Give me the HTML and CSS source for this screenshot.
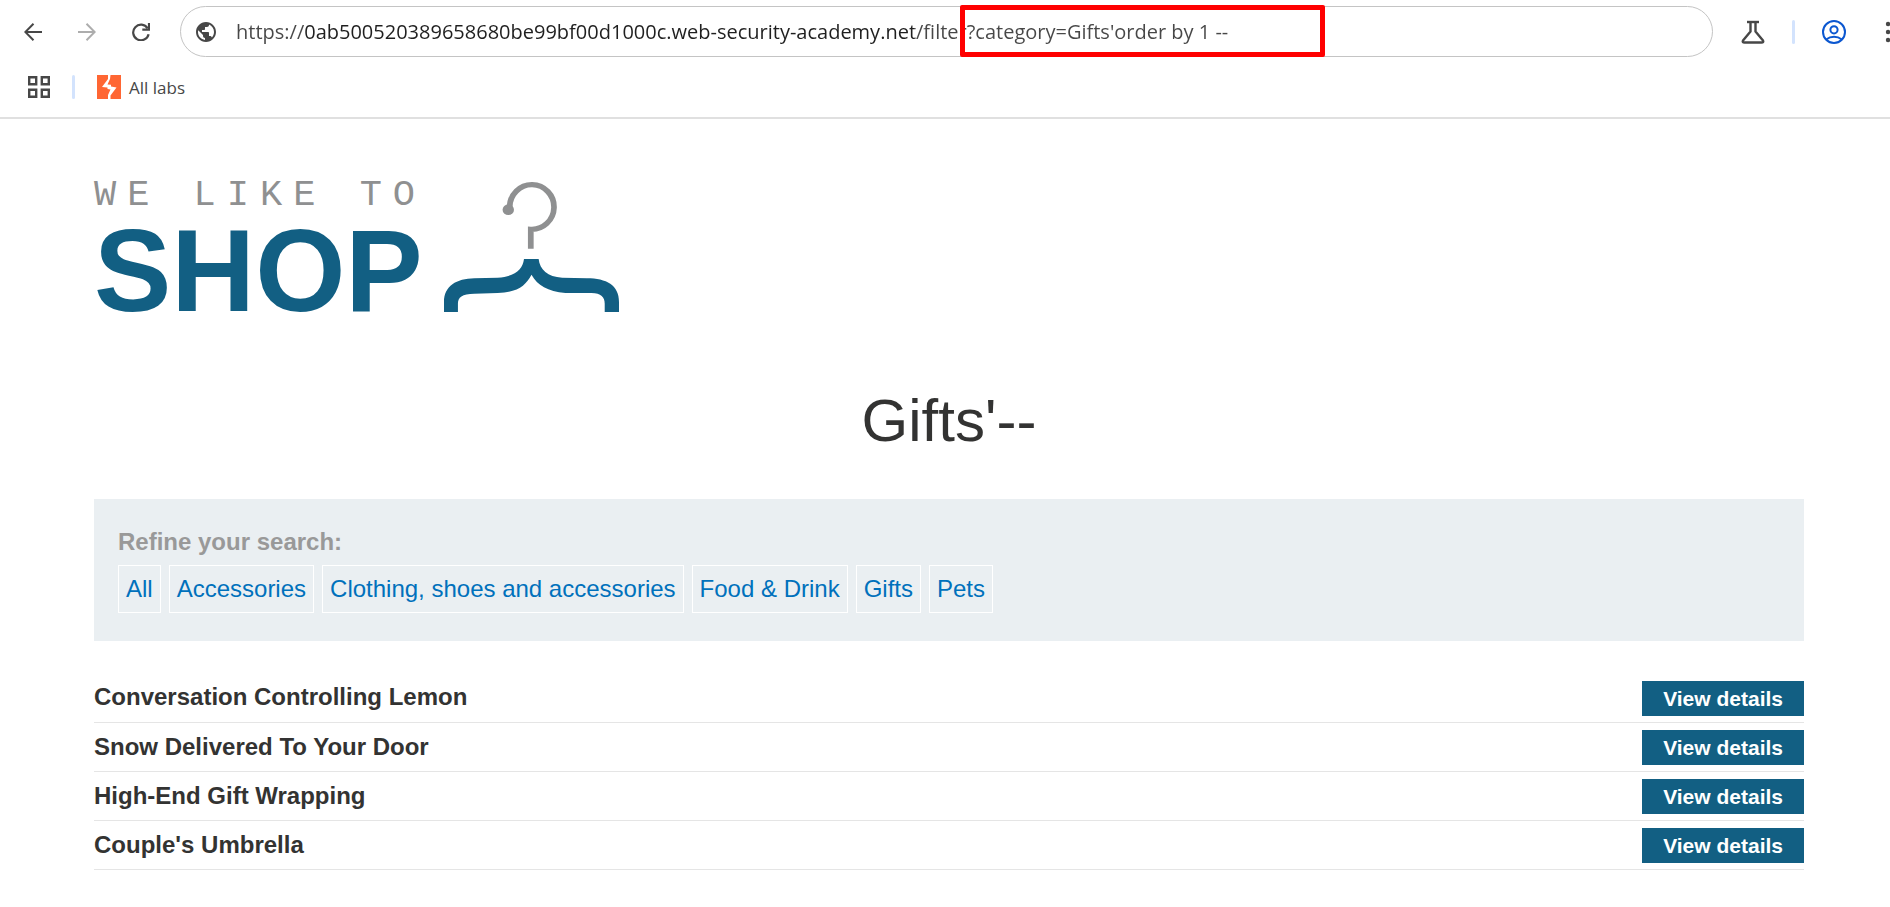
FILE: index.html
```html
<!DOCTYPE html>
<html lang="en">
<head>
  <meta charset="utf-8">
  <title>Gifts - We Like To Shop</title>
  <link rel="stylesheet" href="styles.css">
</head>
<body>
  <div class="browser">
    <div class="toolbar">
      <div class="nav-buttons">
        <button class="icon-button" aria-label="Back">
          <svg width="18" height="18" viewBox="0 0 18 18" fill="none" stroke="currentColor" stroke-width="2"><path d="M18 9H1.5M9.5 .8L1.3 9l8.2 8.2"/></svg>
        </button>
        <button class="icon-button disabled" aria-label="Forward" disabled>
          <svg width="18" height="18" viewBox="0 0 18 18" fill="none" stroke="currentColor" stroke-width="2"><path d="M0 9h16.5M8.5 .8L16.7 9l-8.2 8.2"/></svg>
        </button>
        <button class="icon-button" aria-label="Reload">
          <svg width="18" height="18" viewBox="0 0 18 18" fill="none" stroke="currentColor" stroke-width="2.2"><path d="M15.6 5.3A7.8 7.8 0 1 0 16.6 11.2"/><path d="M17 0v6.7h-6.7"/></svg>
        </button>
      </div>

      <form class="address-bar">
        <svg class="globe" width="20" height="20" viewBox="2 2 20 20" fill="currentColor"><path d="M12 2C6.48 2 2 6.48 2 12s4.48 10 10 10 10-4.48 10-10S17.52 2 12 2zm-1 17.93c-3.95-.49-7-3.85-7-7.93 0-.62.08-1.21.21-1.79L9 15v1c0 1.1.9 2 2 2v1.93zm6.9-2.54c-.26-.81-1-1.39-1.9-1.39h-1v-3c0-.55-.45-1-1-1H8v-2h2c.55 0 1-.45 1-1V7h2c1.1 0 2-.9 2-2v-.41c2.93 1.19 5 4.06 5 7.41 0 2.08-.8 3.97-2.1 5.39z"/></svg>
        <input class="url" type="text" aria-label="Address" spellcheck="false" value="https://0ab500520389658680be99bf00d1000c.web-security-academy.net/filter?category=Gifts'order by 1 --">
        <div class="url-mark"></div>
      </form>

      <div class="toolbar-actions">
        <button class="icon-button" aria-label="Labs">
          <svg width="24" height="24" viewBox="0 0 24 24" fill="none" stroke="currentColor" stroke-width="2.4" stroke-linejoin="round"><path d="M6 2h12"/><path d="M9.5 2v9.5L2 20.5Q1 22.5 3.5 22.5h17Q23 22.5 22 20.5L14.5 11.5V2"/></svg>
        </button>
        <span class="divider"></span>
        <button class="icon-button profile" aria-label="Profile">
          <svg width="24" height="24" viewBox="0 0 24 24" fill="none" stroke="currentColor" stroke-width="2"><circle cx="12" cy="12" r="11"/><circle cx="12" cy="9.8" r="3.6"/><path d="M4.5 19.3c4.2-3.3 10.8-3.3 15 0"/></svg>
        </button>
        <button class="icon-button" aria-label="Menu">
          <svg width="6" height="22" viewBox="0 0 6 22" fill="currentColor"><circle cx="3" cy="3" r="2.2"/><circle cx="3" cy="11" r="2.2"/><circle cx="3" cy="19" r="2.2"/></svg>
        </button>
      </div>
    </div>

    <div class="bookmarks">
      <button class="icon-button apps" aria-label="Apps">
        <svg width="22" height="22" viewBox="0 0 22 22" fill="none" stroke="currentColor" stroke-width="2.4"><path d="M1.2 1.2h7v7h-7zM13.8 1.2h7v7h-7zM1.2 13.8h7v7h-7zM13.8 13.8h7v7h-7z"/></svg>
      </button>
      <span class="divider"></span>
      <a class="bookmark" href="#">
        <svg width="24" height="24" viewBox="0 0 24 24"><path fill="#ff6633" d="M0 0h24v24H0z"/><path fill="#fff" d="M11 0h2.5L13 4l-2.5 5.5 3.5.3v1.7l5.500 1-6 8V24H11v-4l2.500-5.500-3-.5v-1.400L5 12l6-8z"/></svg>
        All labs
      </a>
    </div>
  </div>

  <main class="page">
    <a class="logo" href="#" aria-label="We like to shop">
      <span class="logo-text">
        <span class="logo-tagline">WE LIKE TO</span>
        <span class="logo-name">SHOP</span>
      </span>
      <svg class="hanger" width="175" height="130" viewBox="0 0 490 390" preserveAspectRatio="none">
        <path fill="none" stroke="#8f9091" stroke-width="16" d="M184 83V75A62 67 0 1 1 243 142V200"/>
        <circle cx="180" cy="83" r="16" fill="#8f9091"/>
        <path fill="#125f83" d="M224 231H265C268 262 290 285 331 287L400 289C455 289 490 310 490 360V390H450V365C450 345 440 334 413 333L340 333C290 328 262 310 245 278C228 310 210 330 150 333L85 335C50 336 39 345 39 365V390H0V360C0 312 35 290 85 289L150 287C200 284 220 262 224 231Z"/>
      </svg>
    </a>

    <h1 class="title">Gifts'--</h1>

    <section class="filters">
      <div class="filters-label">Refine your search:</div>
      <nav class="filter-links">
        <a href="#">All</a>
        <a href="#">Accessories</a>
        <a href="#">Clothing, shoes and accessories</a>
        <a href="#">Food &amp; Drink</a>
        <a href="#">Gifts</a>
        <a href="#">Pets</a>
      </nav>
    </section>

    <table class="products">
      <tbody>
        <tr>
          <th scope="row">Conversation Controlling Lemon</th>
          <td><a class="button" href="#">View details</a></td>
        </tr>
        <tr>
          <th scope="row">Snow Delivered To Your Door</th>
          <td><a class="button" href="#">View details</a></td>
        </tr>
        <tr>
          <th scope="row">High-End Gift Wrapping</th>
          <td><a class="button" href="#">View details</a></td>
        </tr>
        <tr>
          <th scope="row">Couple's Umbrella</th>
          <td><a class="button" href="#">View details</a></td>
        </tr>
      </tbody>
    </table>
  </main>
</body>
</html>
```

FILE: styles.css
```css
* {
  box-sizing: border-box;
}

body {
  margin: 0;
  background: #fff;
  color: #333332;
  font-family: "Liberation Sans", Arial, sans-serif;
  font-size: 24px;
  overflow-x: hidden;
}

/* Browser bars */
.browser {
  font-family: "Open Sans", "Segoe UI", sans-serif;
  color: #474747;
  border-bottom: 2px solid #e0e0e0;
}

.toolbar {
  display: flex;
  align-items: center;
  padding: 6px 0 0 24px;
}

.nav-buttons {
  display: flex;
  gap: 36px;
  margin-right: 30px;
}

.icon-button {
  display: flex;
  flex-shrink: 0;
  padding: 0;
  border: none;
  background: none;
  color: #474747;
  cursor: pointer;
}

.icon-button.disabled {
  color: #adadad;
  cursor: default;
}

.icon-button.profile {
  color: #0b57d0;
}

.address-bar {
  position: relative;
  flex: 1;
  display: flex;
  align-items: center;
  gap: 20px;
  height: 51px;
  padding: 0 15px;
  border: 1px solid #c4c4c4;
  border-radius: 26px;
}

.globe {
  flex-shrink: 0;
}

/* The host name is darker than the rest of the address */
.url {
  flex: 1;
  min-width: 0;
  height: 40px;
  padding: 0;
  border: none;
  outline: none;
  background: linear-gradient(90deg, #474747 68px, #1f1f1f 68px, #1f1f1f 678px, #474747 678px);
  -webkit-background-clip: text;
  background-clip: text;
  color: transparent;
  caret-color: #1f1f1f;
  font-family: inherit;
  font-size: 20px;
}

.url-mark {
  position: absolute;
  top: -2px;
  left: 779px;
  width: 365px;
  height: 52px;
  border: 5px solid #ff0000;
  border-radius: 2px;
  pointer-events: none;
}

.toolbar-actions {
  display: flex;
  align-items: center;
  gap: 27px;
  margin: 0 -1px 0 28px;
}

.toolbar-actions .icon-button:last-child {
  margin-left: 12px;
}

.divider {
  width: 3px;
  height: 24px;
  border-radius: 2px;
  background: #d3e3fd;
}

.bookmarks {
  display: flex;
  align-items: center;
  gap: 22px;
  height: 60px;
  padding-left: 28px;
}

.bookmark {
  display: flex;
  align-items: center;
  gap: 8px;
  color: #474747;
  font-size: 17px;
  text-decoration: none;
}

/* Shop page */
.page {
  padding: 56px 86px 36px 94px;
}

.logo {
  display: flex;
  align-items: flex-start;
  width: fit-content;
  gap: 18px;
  text-decoration: none;
}

.logo-text {
  display: flex;
  flex-direction: column;
}

.logo-tagline {
  color: #8f9091;
  font-family: "Liberation Mono", "Courier New", monospace;
  font-size: 37px;
  line-height: 40px;
  letter-spacing: 11px;
  white-space: nowrap;
}

.logo-name {
  color: #125f83;
  font-size: 116px;
  font-weight: bold;
  line-height: 112px;
}

.hanger {
  margin-top: 7px;
}

.title {
  margin: 60px 0 44px;
  font-size: 60px;
  font-weight: normal;
  line-height: 68px;
  text-align: center;
}

.filters {
  display: flex;
  flex-direction: column;
  gap: 8px;
  padding: 28px 24px;
  background: #eaeff2;
}

.filters-label {
  color: #999;
  font-weight: bold;
  line-height: 30px;
}

.filter-links {
  display: flex;
  flex-wrap: wrap;
  gap: 8px;
}

.filter-links a {
  padding: 8px 7px;
  border: 1px solid #fff;
  color: #0071bc;
  line-height: 30px;
  text-decoration: none;
}

.products {
  width: 100%;
  margin-top: 32px;
  border-collapse: collapse;
}

.products th,
.products td {
  height: 49px;
  padding: 0;
  border-bottom: 1px solid #e5e5e5;
  text-align: left;
}

.products td {
  padding-top: 2px;
  text-align: right;
}

.button {
  display: inline-block;
  padding: 0 21px;
  background: #125f83;
  color: #fff;
  font-size: 21px;
  font-weight: bold;
  line-height: 35px;
  text-decoration: none;
  vertical-align: middle;
}
```
